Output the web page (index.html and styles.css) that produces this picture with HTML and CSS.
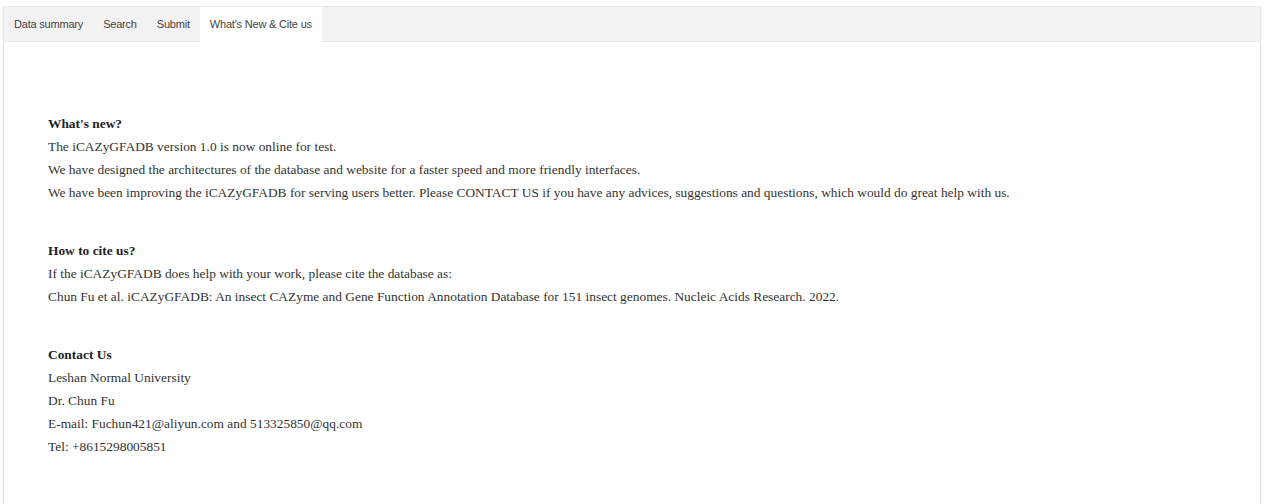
FILE: index.html
```html
<!DOCTYPE html>
<html lang="en">
<head>
  <meta charset="UTF-8">
  <title>iCAZyGFADB - What's New &amp; Cite us</title>
  <link rel="stylesheet" href="styles.css">
</head>
<body>
  <div class="tab-box">
    <!-- Tabs -->
    <ul class="tabs">
      <li class="tab">Data summary</li>
      <li class="tab">Search</li>
      <li class="tab">Submit</li>
      <li class="tab active">What's New &amp; Cite us</li>
    </ul>

    <!-- Content -->
    <div class="tab-content">
      <div class="section">
        <b>What's new?</b><br>
        The iCAZyGFADB version 1.0 is now online for test.<br>
        We have designed the architectures of the database and website for a faster speed and more friendly interfaces.<br>
        We have been improving the iCAZyGFADB for serving users better. Please CONTACT US if you have any advices, suggestions and questions, which would do great help with us.
      </div>

      <div class="section">
        <b>How to cite us?</b><br>
        If the iCAZyGFADB does help with your work, please cite the database as:<br>
        Chun Fu et al. iCAZyGFADB: An insect CAZyme and Gene Function Annotation Database for 151 insect genomes. Nucleic Acids Research. 2022.
      </div>

      <div class="section">
        <b>Contact Us</b><br>
        Leshan Normal University<br>
        Dr. Chun Fu<br>
        E-mail: Fuchun421@aliyun.com and 513325850@qq.com<br>
        Tel: +8615298005851
      </div>
    </div>
  </div>
</body>
</html>
```

FILE: styles.css
```css
body {
  margin: 0;
  padding: 6px 5px 0 3px;
  background-color: #fff;
  font-family: "Liberation Serif", "Times New Roman", serif;
  color: #333;
}
/* Tab box */
.tab-box {
  border: 1px solid #e6e6e6;
  border-bottom: none;
  box-shadow: 0 1px 2px rgba(0, 0, 0, 0.08);
  min-height: 520px;
}
.tabs {
  display: flex;
  margin: 0;
  padding: 0;
  list-style: none;
  background-color: #f2f2f2;
  border-bottom: 1px solid #e8e8e8;
}
.tab {
  padding: 0 10px;
  height: 34px;
  line-height: 34px;
  font-family: "Liberation Sans", Arial, sans-serif;
  font-size: 11px;
  letter-spacing: -0.2px;
  color: #444;
}
.tab.active {
  background-color: #fff;
  margin-bottom: -1px;
  height: 35px;
}
/* Content */
.tab-content {
  padding: 70px 20px 0 44px;
  font-size: 13.4px;
  line-height: 23px;
}
.section {
  margin-bottom: 35px;
}
.section b {
  color: #222;
}
```
